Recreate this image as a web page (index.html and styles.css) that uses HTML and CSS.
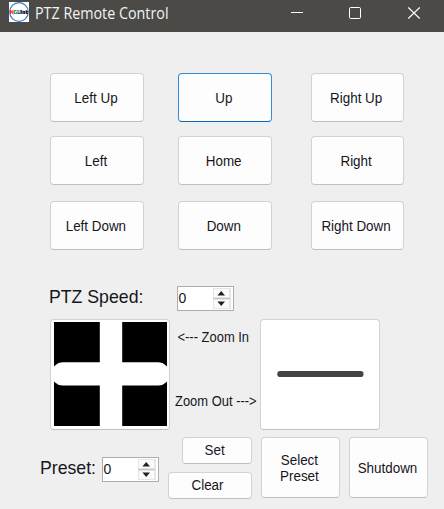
FILE: index.html
```html
<!DOCTYPE html>
<html lang="en">
<head>
<meta charset="utf-8">
<title>PTZ Remote Control</title>
<link rel="stylesheet" href="styles.css">
</head>
<body>
<header class="titlebar">
  <svg class="logo" width="20" height="20" viewBox="0 0 20 20">
    <rect width="20" height="20" fill="#fff"/>
    <circle cx="10" cy="10" r="9.3" fill="none" stroke="#3b78c9" stroke-width="1.2"/>
    <g fill="none" stroke-width="1.1">
      <path d="M1.6 12V8.6L4 11.5V8" stroke="#e8313c"/>
      <path d="M7.6 8.6H5.6V11.5H7.6V10" stroke="#43a65b"/>
      <path d="M9 8V11.5H11.2V8" stroke="#2554a8"/>
      <path d="M12.7 8V12M14.2 12V9.5H15.6V12M17.2 8V12M18.8 9L17.4 10.4L18.8 12" stroke="#222"/>
    </g>
  </svg>
  <h1 class="title"><span>PTZ Remote Control</span></h1>
  <svg class="controls" width="132" height="14" viewBox="0 0 132 14" fill="none" stroke="#fff">
    <path d="M1 6.5H13"/>
    <rect x="59.5" y="1.5" width="11" height="11" rx="1.2"/>
    <path d="M118.3 1.5L129.7 12.5M129.7 1.5L118.3 12.5" stroke-width="1.1"/>
  </svg>
</header>
<main>
  <section class="pad">
    <button class="btn"><span>Left Up</span></button>
    <button class="btn focused"><span>Up</span></button>
    <button class="btn"><span>Right Up</span></button>
    <button class="btn"><span>Left</span></button>
    <button class="btn"><span>Home</span></button>
    <button class="btn"><span>Right</span></button>
    <button class="btn"><span>Left Down</span></button>
    <button class="btn"><span>Down</span></button>
    <button class="btn"><span>Right Down</span></button>
  </section>
  <section class="speed">
    <label class="label">PTZ Speed:</label>
    <div class="spinner"><span class="value">0</span>
      <svg width="19" height="21" viewBox="0 0 19 21"><rect width="18" height="21" fill="#e6e6e6"/><path d="M1 1H16V9H1ZM1 12H16V20H1Z" fill="#fbfbfb"/><path d="M0 10.5H17" stroke="#c4c4c4"/><path d="M8.2 3L12 7.5H4.4ZM8.2 18L12 13.5H4.4Z" fill="#222"/></svg>
    </div>
  </section>
  <section class="zoom">
    <button class="btn plus" aria-label="Zoom in">
      <svg width="113" height="104" viewBox="0 0 113 104"><rect width="113" height="104" fill="#000"/><rect x="45.8" width="22.4" height="104" fill="#fff"/><rect x="-2" y="40.3" width="117" height="23.2" rx="10.5" fill="#fff"/></svg>
    </button>
    <div class="hints"><span class="in">&lt;--- Zoom In</span><span class="out">Zoom Out ---&gt;</span></div>
    <button class="btn minus" aria-label="Zoom out">
      <svg width="88" height="8" viewBox="0 0 88 8"><rect x="1.3" y="1" width="86.2" height="6" rx="2.8" fill="#444"/></svg>
    </button>
  </section>
  <section class="presets">
    <label class="label">Preset:</label>
    <div class="spinner"><span class="value">0</span>
      <svg width="19" height="21" viewBox="0 0 19 21"><rect width="18" height="21" fill="#e6e6e6"/><path d="M1 1H16V9H1ZM1 12H16V20H1Z" fill="#fbfbfb"/><path d="M0 10.5H17" stroke="#c4c4c4"/><path d="M8.2 3L12 7.5H4.4ZM8.2 18L12 13.5H4.4Z" fill="#222"/></svg>
    </div>
    <div class="stack">
      <button class="btn set"><span>Set</span></button>
      <button class="btn clear"><span>Clear</span></button>
    </div>
    <button class="btn tall select"><span>Select<br>Preset</span></button>
    <button class="btn tall"><span>Shutdown</span></button>
  </section>
</main>
</body>
</html>
```
FILE: styles.css
```css
* { box-sizing: border-box; }
body {
  margin: 0;
  width: 444px;
  height: 509px;
  overflow: hidden;
  background: #efefef;
  color: #16161c;
  font: 15.5px/16px "Liberation Sans", Arial, sans-serif;
}
.titlebar {
  display: flex;
  align-items: flex-start;
  height: 32px;
  padding: 2px 0 0 9px;
  background: #4b4a47;
}
.logo { flex: none; }
.title {
  width: 255px;
  margin: 0 0 0 6px;
  color: #f3f3f3;
  font: 400 15.5px/22px "Open Sans", sans-serif;
  white-space: nowrap;
}
.title span { display: inline-block; transform: scaleX(.923); transform-origin: left; }
.controls { flex: none; margin-top: 4px; }
main { padding-top: 41px; }
.btn {
  display: flex;
  align-items: center;
  justify-content: center;
  padding: 0;
  border: 1px solid #d2d2d2;
  border-bottom-color: #bfbfbf;
  border-radius: 4px;
  background: #fdfdfd;
  color: inherit;
  font: inherit;
  white-space: nowrap;
}
.btn span { display: inline-block; transform: translateX(-1px) scaleX(.865); }
.focused { border-color: #2f8edb; border-bottom-color: #0868b8; }
.pad {
  display: grid;
  grid-template-columns: 94px 94px 94px;
  grid-template-rows: 63px 65px 49px;
  column-gap: 34px;
  padding-left: 50px;
}
.pad .btn { height: 49px; }
.pad .btn:nth-child(3n) { margin-left: 5px; margin-right: -4px; }
.speed { display: flex; height: 33px; margin-top: 36px; padding-left: 49px; }
.speed .label { width: 128px; }
.label { font-size: 17.7px; line-height: 23px; white-space: nowrap; }
.spinner {
  display: flex;
  justify-content: space-between;
  width: 57px;
  height: 25px;
  padding: 1px 1px 1px 0;
  border: 1px solid #abadb3;
  background: #fff;
}
.value { line-height: 20px; transform: scaleX(.9); }
.zoom { display: flex; height: 111px; padding-left: 50px; }
.zoom .btn { width: 120px; height: 111px; background: #fff; }
.zoom .plus { padding-bottom: 2px; }
.zoom .minus { padding-bottom: 1px; }
.hints {
  display: flex;
  flex-direction: column;
  justify-content: space-between;
  width: 90px;
  padding: 10px 0 21px 5px;
  white-space: nowrap;
}
.hints span { transform: scaleX(.835); transform-origin: left; }
.in { padding-left: 3px; }
.presets { display: flex; margin-top: 7px; padding-left: 40px; }
.presets .label { width: 62px; padding-top: 20px; }
.presets .spinner { margin-top: 20px; }
.stack { display: flex; flex-direction: column; align-items: flex-end; gap: 8px; width: 93px; }
.stack .btn { height: 27px; padding-bottom: 1px; }
.stack .btn span { transform: translateX(-2px) scaleX(.865); }
.set { width: 70px; }
.clear { width: 84px; }
.tall { width: 79px; height: 61px; }
.select { margin: 0 9px; }
```
